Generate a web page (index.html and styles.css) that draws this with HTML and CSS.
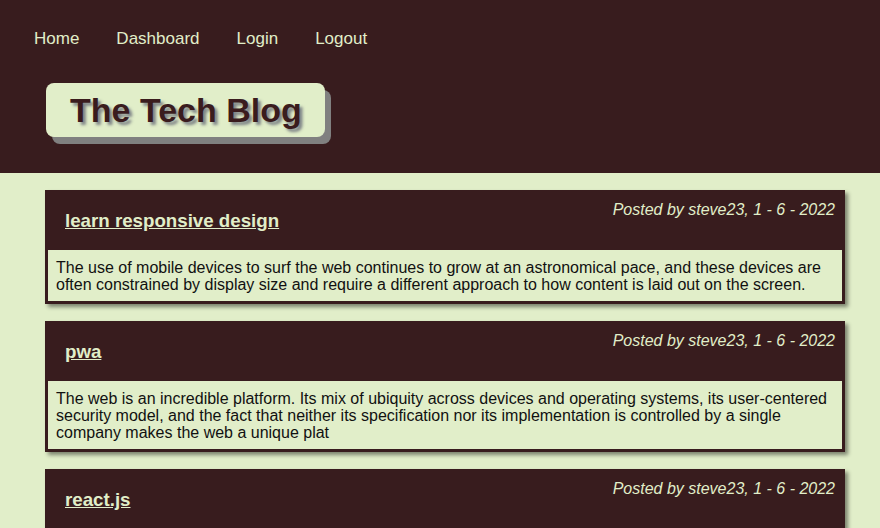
FILE: index.html
```html
<!DOCTYPE html>
<html lang="en">
<head>
<meta charset="utf-8">
<title>The Tech Blog</title>
<link rel="stylesheet" href="styles.css">
</head>
<body>
<header class="site-header">
  <nav class="nav">
    <a href="#">Home</a>
    <a href="#">Dashboard</a>
    <a href="#">Login</a>
    <a href="#">Logout</a>
  </nav>
  <h1 class="brand">The Tech Blog</h1>
</header>
<main class="posts">
  <article class="post">
    <div class="post-head">
      <h3 class="post-title"><a href="#">learn responsive design</a></h3>
      <p class="post-meta">Posted by steve23, 1 - 6 - 2022</p>
    </div>
    <div class="post-body">The use of mobile devices to surf the web continues to grow at an astronomical pace, and these devices are often constrained by display size and require a different approach to how content is laid out on the screen.</div>
  </article>
  <article class="post">
    <div class="post-head">
      <h3 class="post-title"><a href="#">pwa</a></h3>
      <p class="post-meta">Posted by steve23, 1 - 6 - 2022</p>
    </div>
    <div class="post-body">The web is an incredible platform. Its mix of ubiquity across devices and operating systems, its user-centered security model, and the fact that neither its specification nor its implementation is controlled by a single company makes the web a unique plat</div>
  </article>
  <article class="post">
    <div class="post-head">
      <h3 class="post-title"><a href="#">react.js</a></h3>
      <p class="post-meta">Posted by steve23, 1 - 6 - 2022</p>
    </div>
  </article>
</main>
</body>
</html>
```
FILE: styles.css
```css
* { box-sizing: border-box; }

html, body {
  margin: 0;
  padding: 0;
  background: #e1eec9;
  font-family: "Liberation Sans", Arial, sans-serif;
  overflow: hidden;
}

.site-header {
  background: #381c1e;
  padding: 29px 0 36px 0;
}

.nav {
  display: flex;
  gap: 37px;
  padding-left: 34px;
  font-size: 17px;
  line-height: 20px;
}

.nav a {
  color: #e1eec9;
  text-decoration: none;
}

.brand {
  display: inline-block;
  margin: 34px 0 0 46px;
  padding: 8px 23px 7px 24px;
  background: #e1eec9;
  color: #3a1c1e;
  font-size: 34px;
  line-height: 39px;
  font-weight: bold;
  border-radius: 8px;
  box-shadow: 6px 7px 0 #808080;
  text-shadow: 3px 3px 3px rgba(60, 60, 90, 0.6);
}

.posts {
  padding: 17px 0 0 45px;
  display: flex;
  flex-direction: column;
  gap: 17px;
}

.post {
  width: 800px;
  background: #381c1e;
  border: 3px solid #381c1e;
  box-shadow: 3px 3px 4px rgba(0, 0, 0, 0.45);
}

.post-head {
  display: flex;
  justify-content: space-between;
  align-items: flex-start;
  padding: 8px 7px 0 17px;
  height: 57px;
}

.post-title {
  margin: 9px 0 0 0;
  font-size: 18.72px;
  line-height: 22px;
  font-weight: bold;
}

.post-title a {
  color: #e1eec9;
  text-decoration: underline;
}

.post-meta {
  margin: 0;
  color: #e1eec9;
  font-size: 16px;
  line-height: 18px;
  font-style: italic;
}

.post-body {
  background: #e1eec9;
  color: #111;
  font-size: 16px;
  line-height: 17px;
  padding: 9px 8px 8px 8px;
}
```
